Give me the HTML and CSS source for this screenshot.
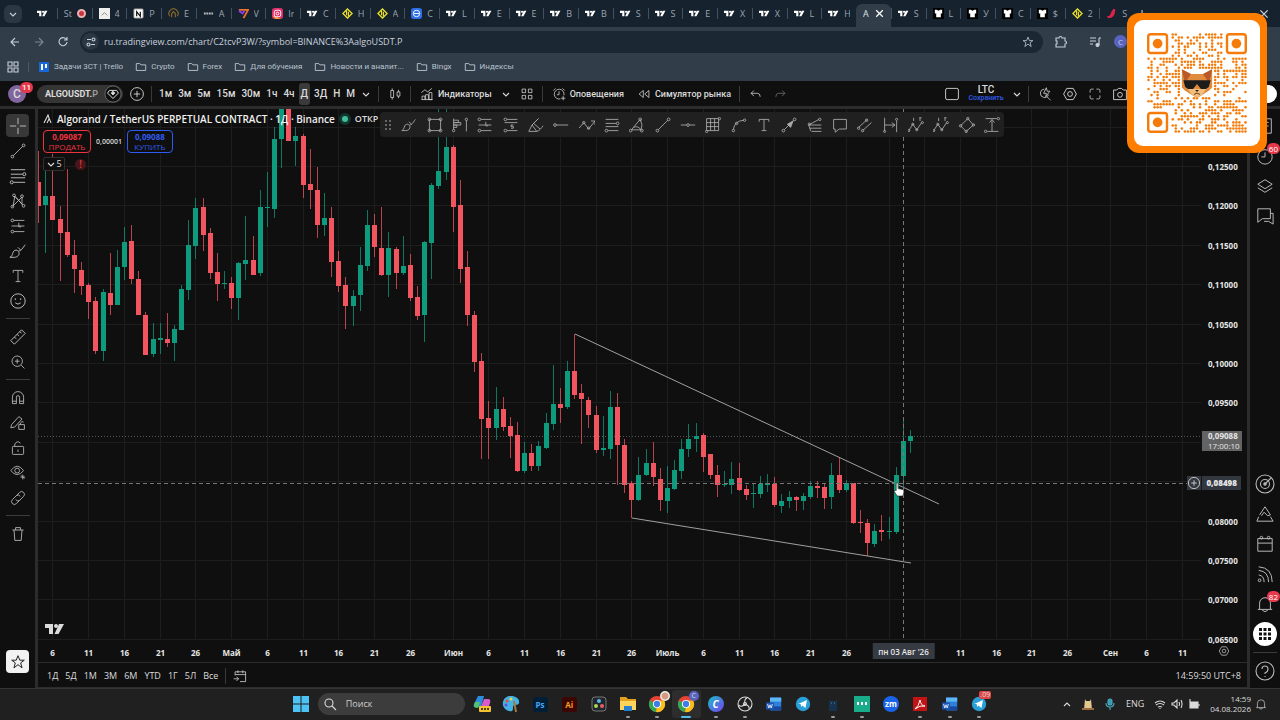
FILE: index.html
```
<!DOCTYPE html>
<html lang="ru">
<head>
    <meta charset="UTF-8">
    <meta name="viewport" content="width=device-width, initial-scale=1.0">
    <title>ALGOUSDT.P 0,09088</title>
    <link rel="stylesheet" href="styles.css">
</head>
<body>
    <svg class="sprite" aria-hidden="true">
        <symbol id="tv" viewBox="0 0 20 12"><path fill="currentColor" d="M0 1h8v10H4V5H0zM13.500 11h-4L14 1h5z"/><circle fill="currentColor" cx="11" cy="3" r="2"/></symbol>
        <symbol id="diamond" viewBox="0 0 12 12"><path d="M6 1l5 5-5 5-5-5z" fill="none" stroke="#e8de2a" stroke-width="1.500"/><path d="M5 3v5M7 4v5" stroke="#e8de2a" stroke-width="1.300"/></symbol>
        <symbol id="white4" viewBox="0 0 12 12"><path fill="#eee" d="M0 0h12v12H0z"/><path d="M3 8l3-3 3 3" fill="none" stroke="#888"/></symbol>
        <symbol id="notion" viewBox="0 0 12 12"><rect x="1" y="1" width="10" height="10" rx="1" fill="#fff" stroke="#999"/><path d="M4 9V4l4 5V4" fill="none" stroke="#111" stroke-width="1.300"/></symbol>
        <symbol id="gold" viewBox="0 0 12 12"><path d="M2 9a5 5 0 1 1 8 0M4 10V6l2-2 2 2v4" fill="none" stroke="#87672c" stroke-width="1.300"/></symbol>
        <symbol id="dots" viewBox="0 0 12 12"><path d="M1 6h10" stroke="#bbb" stroke-width="2" stroke-dasharray="2 .7"/></symbol>
        <symbol id="seven" viewBox="0 0 12 12"><path d="M1 2h10L6 11" fill="none" stroke="#f0722c" stroke-width="2"/><path d="M1 3l4 3 2-3" fill="none" stroke="#8b3df0" stroke-width="2"/></symbol>
        <symbol id="insta" viewBox="0 0 12 12"><rect width="12" height="12" rx="3" fill="#e0306c"/><path d="M0 8l4 4h6z" fill="#f9a42c"/><rect x="2.500" y="2.500" width="7" height="7" rx="2" fill="none" stroke="#fff"/><circle cx="6" cy="6" r="1.500" fill="none" stroke="#fff"/></symbol>
        <symbol id="blue" viewBox="0 0 12 12"><rect width="12" height="12" rx="3" fill="#2f6fe8"/><circle cx="6" cy="6" r="3.500" fill="none" stroke="#fff"/><path d="M3 6h6" stroke="#fff"/></symbol>
        <symbol id="shirt" viewBox="0 0 12 12"><path fill="#000" d="M0 0h12v12H0z"/><path fill="#fff" d="M2 2h2l2 1 2-1h2v4H8.500v4h-5V6H2z"/></symbol>
        <symbol id="chili" viewBox="0 0 12 12"><path d="M8 1h2c0 5-1 10-8 10l-1-2c4 0 4-3 5-5z" fill="#e0224a"/></symbol>
        <symbol id="chev" viewBox="0 0 10 10"><path d="M2 4l3 3 3-3"/></symbol>
        <symbol id="close" viewBox="0 0 10 10"><path d="M2 2l6 6M8 2l-6 6"/></symbol>
        <symbol id="folder" viewBox="0 0 14 12"><path d="M1.500 2h4l1.500 1.500h5.500V10h-11z"/></symbol>
        <symbol id="apps" viewBox="0 0 12 12"><path d="M1 1h4v4H1zM7 1h4v4H7zM1 7h4v4H1zM7 7h4v4H7z"/></symbol>
        <symbol id="back" viewBox="0 0 14 14"><path d="M11 7H3M7 3L3 7l4 4"/></symbol>
        <symbol id="fwd" viewBox="0 0 14 14"><path d="M3 7h8M7 3l4 4-4 4"/></symbol>
        <symbol id="reload" viewBox="0 0 14 14"><path d="M11 7a4 4 0 1 1-1-3l1 1M11 2v3H8"/></symbol>
        <symbol id="tune" viewBox="0 0 14 14"><path d="M3 4.500h4M7 9.500h4"/><circle cx="9.500" cy="4.500" r="1.500"/><circle cx="4.500" cy="9.500" r="1.500"/></symbol>
        <symbol id="star" viewBox="0 0 20 20"><path d="M10 3l2 5h5l-4 3 1.500 5.500L10 13l-4.500 3.500L7 11 3 8h5z"/></symbol>
        <symbol id="puzzle" viewBox="0 0 14 14"><path d="M2 3h3a1.500 1.500 0 0 1 3 0h3v3a1.500 1.500 0 0 1 0 3v3H2V9h1V6H2z"/></symbol>
        <symbol id="music" viewBox="0 0 14 14"><path d="M2 3h6M2 6h6M2 9h3M11 3v7M11 3h2"/><circle cx="9.500" cy="10" r="1.500" fill="currentColor"/></symbol>
        <symbol id="gem" viewBox="0 0 20 20"><circle cx="10" cy="10" r="9" fill="#0f0f0f" stroke="#666"/><path d="M6 6h8l2 3-6 6-6-6z"/><path d="M10 7l2 2-2 2-2-2z" fill="currentColor"/></symbol>
        <symbol id="plus-o" viewBox="0 0 20 20"><circle cx="10" cy="10" r="8"/><path d="M10 6v8M6 10h8"/></symbol>
        <symbol id="candles" viewBox="0 0 20 20"><path d="M4 5h4v10H4zM6 2v3M6 15v3M13 7h4v6h-4zM15 4v3M15 13v3"/></symbol>
        <symbol id="indic" viewBox="0 0 20 20"><path d="M2 8l5-4 4 3 6-5M3 18v-5h4v5M8 18v-7h4v7M13 18V8h4v10zM2 18h16"/></symbol>
        <symbol id="layout4" viewBox="0 0 20 20"><path d="M3 3h5v5H3zM12 3h5v5h-5zM3 12h5v5H3zM12 12h5v5h-5z"/></symbol>
        <symbol id="alarm" viewBox="0 0 20 20"><path d="M17 12a7 7 0 1 0-5 5M10 6v5H7M2 5l3-3M15 2l3 3M16 13v6M13 16h6"/></symbol>
        <symbol id="rewind" viewBox="0 0 20 20"><path d="M9 5v10l-6-5zM17 5v10l-6-5z"/></symbol>
        <symbol id="undo" viewBox="0 0 20 20"><path d="M7 5L3 9l4 4M3 9h9q4 0 4 5"/></symbol>
        <symbol id="redo" viewBox="0 0 20 20"><path d="M13 5l4 4-4 4M17 9H8q-4 0-4 5"/></symbol>
        <symbol id="square" viewBox="0 0 20 20"><rect x="2" y="3" width="16" height="14" rx="2"/></symbol>
        <symbol id="search-fast" viewBox="0 0 20 20"><path d="M9 3a6 6 0 1 0 6 8M13 14l5 5M12 1L8 9h4l-1 5 6-8h-4z"/></symbol>
        <symbol id="hex" viewBox="0 0 20 20"><path d="M6 3h8l4 7-4 7H6l-4-7z"/><circle cx="10" cy="10" r="3"/></symbol>
        <symbol id="full" viewBox="0 0 20 20"><path d="M3 8V5q0-2 2-2h3M12 3h3q2 0 2 2v3M17 12v3q0 2-2 2h-3M8 17H5q-2 0-2-2v-3"/></symbol>
        <symbol id="camera" viewBox="0 0 20 20"><path d="M2 5h4l2-2h4l2 2h4v12H2z"/><circle cx="10" cy="11" r="3"/></symbol>
        <symbol id="cross" viewBox="0 0 20 20"><path d="M10 1v7M10 12v7M1 10h7M12 10h7"/></symbol>
        <symbol id="trend" viewBox="0 0 20 20"><path d="M4 16L16 4"/><circle cx="3" cy="17" r="1.700"/><circle cx="17" cy="3" r="1.700"/></symbol>
        <symbol id="fib" viewBox="0 0 20 20"><path d="M2 3h16M2 8h13M2 12h16M5 17h13"/><circle cx="17" cy="8" r="1.700"/><circle cx="3" cy="17" r="1.700"/></symbol>
        <symbol id="xabcd" viewBox="0 0 20 20"><path d="M4 16L6 4l9 10V5L3 17M6 4l10 11"/><circle cx="3" cy="17" r="1.700"/><circle cx="5" cy="3" r="1.700"/><circle cx="15" cy="4" r="1.700"/><circle cx="17" cy="16" r="1.700"/></symbol>
        <symbol id="longpos" viewBox="0 0 20 20"><path d="M5 3h13M2 10h16M5 17h13M11 6v5h3"/><circle cx="3" cy="3" r="1.700"/><circle cx="3" cy="17" r="1.700"/></symbol>
        <symbol id="shortpos" viewBox="0 0 20 20"><path d="M5 3h13M2 7h16M5 17h13M13 10h-3v2h3v2h-3"/><circle cx="3" cy="3" r="1.700"/><circle cx="3" cy="17" r="1.700"/></symbol>
        <symbol id="brush" viewBox="0 0 20 20"><path d="M1 17c4-1 2-8 7-8 5 1 4 8-2 8zM11 9c1 3 4-2 7-6M10 6l3 3"/></symbol>
        <symbol id="text" viewBox="0 0 20 20"><path d="M4 6V3h12v3M10 3v14M7 17h6"/></symbol>
        <symbol id="smile" viewBox="0 0 20 20"><circle cx="10" cy="10" r="8"/><path d="M7 7v2M13 7v2M7 12q3 3 6 0"/></symbol>
        <symbol id="ruler" viewBox="0 0 20 20"><path d="M2 14L14 2l4 4L6 18zM6 10l2 2M9 7l2 2M12 4l2 2"/></symbol>
        <symbol id="zoomin" viewBox="0 0 20 20"><circle cx="9" cy="9" r="6.500"/><path d="M14 14l4 4M9 6v6M6 9h6"/></symbol>
        <symbol id="magnet" viewBox="0 0 20 20"><path d="M3 17V9a7 7 0 0 1 14 0v8h-5V9a2 2 0 0 0-4 0v8zM3 14h5M12 14h5"/></symbol>
        <symbol id="penlock" viewBox="0 0 20 20"><path d="M2 12L11 2l4 3-9 10-5 1zM11 12h7v6h-7zM13 12v-2q2-3 4-1"/></symbol>
        <symbol id="lock" viewBox="0 0 20 20"><rect x="3" y="8" width="14" height="10" rx="1"/><path d="M6 8V5q3-5 7-1M10 12v3"/></symbol>
        <symbol id="eye" viewBox="0 0 20 20"><path d="M1 7q8-11 16 0-8 10-16 0zM13 15h6M16 12v6M14 13l4 4"/><circle cx="9" cy="7" r="3"/></symbol>
        <symbol id="link" viewBox="0 0 20 20"><path d="M8 7l4-4a3.500 3.500 0 0 1 5 5l-5 5q-3 2-5-1M12 13l-4 4a3.500 3.500 0 0 1-5-5l5-5q3-2 5 1"/></symbol>
        <symbol id="trash" viewBox="0 0 20 20"><path d="M3 5h14M7 5V2h6v3M5 5l1 13h8l1-13"/></symbol>
        <symbol id="rect" viewBox="0 0 20 20"><path d="M3 3h14v14H3z"/><circle cx="3" cy="3" r="1.700"/><circle cx="17" cy="3" r="1.700"/><circle cx="3" cy="17" r="1.700"/><circle cx="17" cy="17" r="1.700"/></symbol>
        <symbol id="profile" viewBox="0 0 20 20"><path d="M2 2v14M2 4h6v3H2M2 7h9v3H2M2 10h4v3H2M18 4v14"/><circle cx="2" cy="17" r="1.500"/><circle cx="18" cy="3" r="1.500"/></symbol>
        <symbol id="highlight" viewBox="0 0 20 20"><path d="M1 18l4-8 8-8M5 10l6 8c4-1 5-4 8-7M7 8l8 7M1 18h10M5 10l8-8"/></symbol>
        <symbol id="ray" viewBox="0 0 20 20"><path d="M4 10h15"/><circle cx="2.500" cy="10" r="1.700"/></symbol>
        <symbol id="path" viewBox="0 0 20 20"><path d="M0 14l6-7 6 8 8-10M15 5h5v5"/><circle cx="6" cy="7" r="1.500"/><circle cx="12" cy="14" r="1.500"/></symbol>
        <symbol id="tri" viewBox="0 0 20 20"><path d="M3 16L14 3q4 7 1 13zM6 13q5-3 10 4"/><circle cx="2" cy="17" r="1.700"/><circle cx="14" cy="3" r="1.700"/><circle cx="16" cy="17" r="1.700"/></symbol>
        <symbol id="hline" viewBox="0 0 20 20"><path d="M1 10h7M12 10h7"/><circle cx="10" cy="10" r="1.700"/></symbol>
        <symbol id="gann" viewBox="0 0 20 20"><path d="M2 2h15v15H2zM2 7h15M2 12h15M7 2v15M12 2v15"/><circle cx="18" cy="2" r="1.500"/><circle cx="2" cy="18" r="1.500"/></symbol>
        <symbol id="arc" viewBox="0 0 20 20"><path d="M3 16q1-11 13-12"/><circle cx="3" cy="17" r="1.500"/><circle cx="17" cy="4" r="1.500"/><circle cx="7" cy="8" r="1.500"/></symbol>
        <symbol id="arrow" viewBox="0 0 20 20"><path d="M4 16L16 4"/><path d="M8 9l7-4-3 8z" fill="currentColor"/><circle cx="3" cy="17" r="1.700"/><circle cx="17" cy="3" r="1.700"/></symbol>
        <symbol id="pitch" viewBox="0 0 20 20"><path d="M2 10l13-7M3 10h15M3 14h15M6 18h12M2 10l3 8"/><circle cx="3" cy="9" r="1.500"/><circle cx="16" cy="3" r="1.500"/></symbol>
        <symbol id="comment" viewBox="0 0 20 20"><path d="M2 3h16v12H9l-5 4v-4H2z"/></symbol>
        <symbol id="channel" viewBox="0 0 20 20"><path d="M2 13L13 3M7 17L18 7"/><circle cx="2" cy="14" r="1.500"/><circle cx="12" cy="4" r="1.500"/><circle cx="7" cy="17" r="1.500"/></symbol>
        <symbol id="range" viewBox="0 0 20 20"><path d="M2 1v17M17 5v14M2 10h13M11 7l4 3-4 3"/><circle cx="2" cy="18" r="1.300"/><circle cx="17" cy="3" r="1.300"/></symbol>
        <symbol id="wave" viewBox="0 0 20 20"><path d="M1 17l5-8 5 7 6-9M7 1v4M14 1h3M15 1v4"/><circle cx="1" cy="17" r="1.300"/><circle cx="6" cy="9" r="1.300"/><circle cx="11" cy="16" r="1.300"/><circle cx="18" cy="7" r="1.300"/></symbol>
        <symbol id="rot" viewBox="0 0 20 20"><path d="M11 2l7 8-9 8-7-7z"/><circle cx="11" cy="2" r="1.500"/><circle cx="18" cy="10" r="1.500"/><circle cx="9" cy="18" r="1.500"/><circle cx="2" cy="11" r="1.500"/></symbol>
        <symbol id="vrange" viewBox="0 0 20 20"><path d="M2 2h14M4 18h14M10 18V4M7 7l3-4 3 4"/><circle cx="18" cy="2" r="1.500"/><circle cx="2" cy="18" r="1.500"/></symbol>
        <symbol id="list" viewBox="0 0 20 20"><path d="M2 2h15v16h-5l-2-2-2 2H2zM5 6h9M5 10h9"/></symbol>
        <symbol id="clock" viewBox="0 0 20 20"><circle cx="10" cy="11" r="8"/><path d="M10 6v5H6"/></symbol>
        <symbol id="layers" viewBox="0 0 20 20"><path d="M2 8l8-5 8 5-8 5zM2 12l8 5 8-5"/></symbol>
        <symbol id="chat" viewBox="0 0 20 20"><path d="M2 2h14v11H7l-5 4zM9 16h5l5 3V7h-3"/></symbol>
        <symbol id="radar" viewBox="0 0 20 20"><circle cx="10" cy="10" r="9"/><circle cx="10" cy="10" r="4.500"/><path d="M10 10l6-6"/><circle cx="10" cy="10" r="1.200" fill="currentColor"/></symbol>
        <symbol id="pyramid" viewBox="0 0 20 20"><path d="M4 11l6-9 6 9-3 1-4-4-3 4M3 13l-2 5h18l-3-5"/></symbol>
        <symbol id="cal" viewBox="0 0 20 20"><path d="M2 4h16v14H2zM2 9h16"/><circle cx="6" cy="3" r="1.500"/><circle cx="14" cy="3" r="1.500"/></symbol>
        <symbol id="rss" viewBox="0 0 20 20"><circle cx="4" cy="17" r="1.500"/><path d="M3 11q6 1 6 8M3 6q11 1 11 13M3 2q15 1 15 17"/></symbol>
        <symbol id="bell" viewBox="0 0 20 20"><path d="M2 16h16M4 16V9a6 6 0 0 1 12 0v7M7 17q3 3 6 0"/></symbol>
        <symbol id="help" viewBox="0 0 20 20"><circle cx="10" cy="10" r="9"/><path d="M7 8q0-3 3-3t3 3-3 4v1M10 15v1"/></symbol>
        <symbol id="goto" viewBox="0 0 20 20"><path d="M3 9V4h15v14h-8M3 8h15M7 2v4M14 2v4M1 14h7M5 11l3 3-3 3"/></symbol>
        <symbol id="chrome" viewBox="0 0 20 20"><circle cx="10" cy="10" r="9" fill="#e64335"/><path d="M10 10L2 6a9 9 0 0 0 7 13z" fill="#33a654"/><path d="M10 10l-1 9A9 9 0 0 0 18 6h-8z" fill="#fbbf1a"/><circle cx="10" cy="10" r="4.500" fill="#fff"/><circle cx="10" cy="10" r="3.500" fill="#3d7ee8"/></symbol>
        <symbol id="word" viewBox="0 0 20 20"><rect x="5" y="2" width="14" height="16" rx="1" fill="#2f7fdc"/><path fill="#5cb7f3" d="M5 2h14v5H5z"/><path fill="#174a9c" d="M5 13h14v5H5z"/><rect y="8" width="10" height="9" rx="1" fill="#1c56b5"/><path d="M2 10l1.500 5L5 11l1.500 4L8 10" fill="none" stroke="#fff"/></symbol>
        <symbol id="tg" viewBox="0 0 20 20"><circle cx="10" cy="10" r="9" fill="#279fd8"/><path d="M4 10l11-5-2 10-4-3-1 2-1-4z" fill="#fff"/></symbol>
    </svg>

    <header class="browser">
        <div class="tabstrip">
            <button class="tab-search" aria-label="Поиск вкладок"><svg class="ic s10"><use href="#chev"/></svg></button>
            <nav class="tabs" id="tabs" aria-label="Вкладки"></nav>
            <div class="window-controls">
                <button aria-label="Новая вкладка">+</button>
                <button class="win-close" aria-label="Закрыть"><svg class="ic s12"><use href="#close"/></svg></button>
            </div>
        </div>
        <div class="urlbar">
            <button aria-label="Назад"><svg class="ic s14"><use href="#back"/></svg></button>
            <button class="dim" aria-label="Вперёд"><svg class="ic s14"><use href="#fwd"/></svg></button>
            <button aria-label="Обновить"><svg class="ic s14"><use href="#reload"/></svg></button>
            <div class="omnibox">
                <span class="site"><svg class="ic s14"><use href="#tune"/></svg></span>
                <input type="text" aria-label="Адрес" value="ru.tradingview.com/chart/C2tcvP3W/?symbol=BINANCE%3AalgoUSDT.P">
                <svg class="ic s14"><use href="#star"/></svg>
            </div>
            <div class="url-actions">
                <button aria-label="Расширения"><svg class="ic s14"><use href="#puzzle"/></svg></button>
                <button aria-label="Медиа"><svg class="ic s14"><use href="#music"/></svg></button>
                <span class="profile">C</span>
            </div>
        </div>
        <nav class="bookmarks">
            <svg class="ic s12"><use href="#apps"/></svg>
            <span class="vsep"></span>
            <a href="#"><svg class="s12" viewBox="0 0 12 12"><rect x="1" y="1" width="10" height="10" rx="1" fill="#1868db"/><path fill="#fff" d="M3 3h2v6H3zM7 3h2v4H7z"/></svg>Задачи 3СТ | Trello</a>
            <a href="#"><svg class="ic s12"><use href="#folder"/></svg>Crypto</a>
            <a href="#"><svg class="ic s12"><use href="#folder"/></svg>Forex</a>
            <a href="#"><svg class="ic s12"><use href="#folder"/></svg>Для обучения</a>
            <a href="#"><svg class="ic s12"><use href="#folder"/></svg>Новости и аналит...</a>
            <a href="#"><svg class="ic s12"><use href="#folder"/></svg>Bingx</a>
            <a href="#"><svg class="ic s12"><use href="#folder"/></svg>Индексы</a>
        </nav>
    </header>

    <div class="topbar">
        <div class="account">C<span class="badge">11</span></div>
        <button class="symbol">ALGOUSDT.<span>P</span><svg class="ic s18"><use href="#gem"/></svg></button>
        <button class="w28" aria-label="Сравнить"><svg class="ic s16"><use href="#plus-o"/></svg></button>
        <span class="vsep"></span>
        <div class="intervals">
            <button>1м</button><button>3м</button><button>5м</button><button>15м</button><button>30м</button><button>1ч</button><button>4ч</button><button class="on">Д</button><button>3Д</button><button>Н</button><button>М</button>
            <button aria-label="Ещё"><svg class="ic s10"><use href="#chev"/></svg></button>
        </div>
        <span class="vsep"></span>
        <button class="w31" aria-label="Свечи"><svg class="ic s14"><use href="#candles"/></svg></button>
        <span class="vsep"></span>
        <button class="labelled"><svg class="ic s14"><use href="#indic"/></svg>Индикаторы</button>
        <button class="w28" aria-label="Избранное"><svg class="ic s10"><use href="#chev"/></svg></button>
        <button aria-label="Шаблоны"><svg class="ic s14"><use href="#layout4"/></svg></button>
        <span class="vsep gap"></span>
        <button class="labelled"><svg class="ic s14"><use href="#alarm"/></svg>Оповещения</button>
        <button class="labelled"><svg class="ic s14"><use href="#rewind"/></svg>Симулятор рынка</button>
        <span class="vsep"></span>
        <button class="w31" aria-label="Отменить"><svg class="ic s14"><use href="#undo"/></svg></button>
        <button class="dim" aria-label="Вернуть"><svg class="ic s14"><use href="#redo"/></svg></button>
        <div class="topbar-right">
            <button aria-label="Макет"><svg class="ic s16"><use href="#square"/></svg></button>
            <button class="save">LTC<small>Сохранить</small></button>
            <button aria-label="Макеты"><svg class="ic s10"><use href="#chev"/></svg></button>
            <span class="vsep"></span>
            <button class="w25" aria-label="Поиск"><svg class="ic s14"><use href="#search-fast"/></svg></button>
            <button class="w25" aria-label="Настройки"><svg class="ic s16"><use href="#hex"/></svg></button>
            <button class="w25" aria-label="Полный экран"><svg class="ic s14"><use href="#full"/></svg></button>
            <button class="w25" aria-label="Снимок"><svg class="ic s16"><use href="#camera"/></svg></button>
            <button class="publish" aria-label="Опубликовать"></button>
        </div>
    </div>

    <main class="workspace">
        <aside class="tools" aria-label="Инструменты рисования">
            <button class="on" aria-label="Перекрестие"><svg class="ic s18"><use href="#cross"/></svg></button>
            <button aria-label="Линия"><svg class="ic s16"><use href="#trend"/></svg></button>
            <button aria-label="Фибоначчи"><svg class="ic s18"><use href="#fib"/></svg></button>
            <button aria-label="Паттерны"><svg class="ic s16"><use href="#xabcd"/></svg></button>
            <button aria-label="Позиция"><svg class="ic s16"><use href="#longpos"/></svg></button>
            <button aria-label="Кисть"><svg class="ic s18"><use href="#brush"/></svg></button>
            <button aria-label="Текст"><svg class="ic s16"><use href="#text"/></svg></button>
            <button aria-label="Значки"><svg class="ic s18"><use href="#smile"/></svg></button>
            <hr>
            <button aria-label="Линейка"><svg class="ic s18"><use href="#ruler"/></svg></button>
            <button aria-label="Увеличить"><svg class="ic s16"><use href="#zoomin"/></svg></button>
            <hr>
            <button aria-label="Магнит"><svg class="ic s16"><use href="#magnet"/></svg></button>
            <button aria-label="Режим рисования"><svg class="ic s16"><use href="#penlock"/></svg></button>
            <button aria-label="Блокировка"><svg class="ic s16"><use href="#lock"/></svg></button>
            <button aria-label="Скрыть"><svg class="ic s16"><use href="#eye"/></svg></button>
            <button aria-label="Связать"><svg class="ic s16"><use href="#link"/></svg></button>
            <hr>
            <button aria-label="Удалить"><svg class="ic s16"><use href="#trash"/></svg></button>
            <button class="fav" aria-label="Панель избранного"><svg class="ic s18"><use href="#star"/></svg></button>
        </aside>

        <section class="chart">
            <div class="plot">
                <svg id="plot" viewBox="38 109 1163 531" preserveAspectRatio="none" role="img" aria-label="График ALGOUSDT.P"></svg>
                <div class="legend">
                    <div class="title">
                        <svg class="ic s10" viewBox="0 0 10 10"><path d="M1 9l4-8 1 3 2 5M4 9l2-4"/></svg>
                        <h1>Algorand / TetherUS PERPETUAL CONTRACT · 1Д · Binance</h1>
                        <span class="status"></span>ОТКР
                    </div>
                    <div class="quotes">
                        <button class="sell"><b>0,09087</b>ПРОДАТЬ</button>
                        <span>0,00001</span>
                        <button class="buy"><b>0,09088</b>КУПИТЬ</button>
                    </div>
                    <div class="studies">
                        <button><svg class="ic s10"><use href="#chev"/></svg>5</button>
                        <span class="alert">!</span>
                    </div>
                </div>
                <div class="floating" id="floating"></div>
                <svg class="tv-logo"><use href="#tv"/></svg>
                <svg class="hand" viewBox="0 0 12 16"><path d="M3 1q2-1 2 1v5l5 1q2 1 1 4l-1 3H4L1 10q0-2 2-1z" fill="#fff" stroke="#222" stroke-width=".7"/></svg>
            </div>
            <div class="price-axis" id="prices">
                <span class="tag last">0,09088<small>17:00:10</small></span>
                <span class="tag cursor"><svg class="ic s14"><use href="#plus-o"/></svg><b>0,08498</b></span>
            </div>
            <div class="time-axis" id="times"></div>
            <div class="corner"><svg class="ic s12"><use href="#hex"/></svg></div>
            <div class="ranges">
                <button>1Д</button><button>5Д</button><button>1М</button><button>3М</button><button>6М</button><button>YTD</button><button>1Г</button><button>5Л</button><button>Все</button>
                <span class="vsep"></span>
                <button aria-label="Перейти к дате"><svg class="ic s14"><use href="#goto"/></svg></button>
                <time>14:59:50 UTC+8</time>
            </div>
        </section>

        <aside class="widgets" aria-label="Виджеты">
            <button aria-label="Список"><svg class="ic s18"><use href="#list"/></svg></button>
            <button aria-label="Оповещения"><svg class="ic s18"><use href="#clock"/></svg><span class="badge">60</span></button>
            <button aria-label="Слои"><svg class="ic s18"><use href="#layers"/></svg></button>
            <button aria-label="Чаты"><svg class="ic s18"><use href="#chat"/></svg></button>
            <div class="spacer"></div>
            <button aria-label="Скринер"><svg class="ic s20"><use href="#radar"/></svg></button>
            <button aria-label="Pine"><svg class="ic s18"><use href="#pyramid"/></svg></button>
            <button aria-label="Календарь"><svg class="ic s18"><use href="#cal"/></svg></button>
            <button aria-label="Новости"><svg class="ic s18"><use href="#rss"/></svg></button>
            <button aria-label="Уведомления"><svg class="ic s18"><use href="#bell"/></svg><span class="badge">82</span></button>
            <button aria-label="Продукты"><svg class="s24" viewBox="0 0 24 24"><circle cx="12" cy="12" r="12" fill="#fff"/><path d="M6 7.500h12M6 12h12M6 16.500h12" stroke="#111" stroke-width="3" stroke-dasharray="3 1.500"/></svg></button>
            <hr>
            <button aria-label="Помощь"><svg class="ic s20"><use href="#help"/></svg></button>
        </aside>
    </main>

    <footer class="taskbar">
        <div class="dock">
            <button aria-label="Пуск"><svg class="s16" viewBox="0 0 16 16"><path fill="#4cc2f5" d="M0 0h7.500v7.500H0zM8.500 0H16v7.500H8.500zM0 8.500h7.500V16H0zM8.500 8.500H16V16H8.500z"/></svg></button>
            <label class="search"><svg class="ic s14" viewBox="0 0 14 14"><circle cx="6" cy="6" r="4"/><path d="M9 9l4 4"/></svg><input type="search" placeholder="Поиск" aria-label="Поиск"></label>
            <button aria-label="Copilot"><svg class="s18" viewBox="0 0 18 18"><path fill="#2a8de0" d="M5 1h6L8 12H2q-2 0-1-3z"/><path fill="#52c46a" d="M2 7h5l-2 6q-5 0-4-3z"/><path fill="#d75bc8" d="M11 4h5q2 1 1 4l-2 6H7z"/><rect x="6" y="11" width="12" height="6" rx="1" fill="#f6c330"/><path d="M8 14h8" stroke="#51400a" stroke-width="2" stroke-dasharray="2 1"/></svg></button>
            <button aria-label="Paint"><svg class="s18" viewBox="0 0 18 18"><path fill="#43b3e6" d="M9 1c5 0 9 3 8 7-1 3-6 1-6 4s0 5-4 4C-2 14-1 1 9 1z"/><circle cx="5" cy="6" r="1.500" fill="#e94b3c"/><circle cx="9" cy="4" r="1.500" fill="#f8d14a"/><circle cx="4" cy="10" r="1.500" fill="#6d4be0"/><path d="M12 6l2 11" stroke="#a7763a" stroke-width="2"/></svg></button>
            <button aria-label="Photoshop"><span class="adobe ps">Ps</span></button>
            <button aria-label="Illustrator"><span class="adobe ai">Ai</span></button>
            <button aria-label="DaVinci"><svg class="s16" viewBox="0 0 16 16"><rect x="1" y="1" width="14" height="14" rx="3" fill="#20262d" stroke="#777"/><circle cx="8" cy="5" r="2" fill="#59b9e8"/><circle cx="5" cy="10" r="2" fill="#a9d94a"/><circle cx="11" cy="10" r="2" fill="#ef5a63"/></svg></button>
            <button class="run" aria-label="Проводник"><svg class="s18" viewBox="0 0 18 18"><path fill="#e3a01f" d="M1 2h6l2 2h8v11H1z"/><path fill="#fcd45c" d="M1 6h16v9H1z"/><path fill="#2580d0" d="M5 11h8v5H5z"/></svg></button>
            <button class="run" aria-label="Chrome"><svg class="s18"><use href="#chrome"/></svg><i class="who face"></i></button>
            <button class="run active" aria-label="Chrome C"><svg class="s18"><use href="#chrome"/></svg><i class="who">C</i></button>
            <button class="run" aria-label="Canva"><span class="canva">C</span></button>
            <button class="run" aria-label="OBS"><svg class="ic s16" viewBox="0 0 16 16"><circle cx="8" cy="8" r="7"/><path d="M8 8q-1-5 2-6M8 8q5 2 4 5M8 8q-4 4-6 1"/><circle cx="8" cy="8" r="1.500"/></svg></button>
            <button aria-label="Word"><svg class="s16"><use href="#word"/></svg></button>
            <button aria-label="Telegram"><svg class="s16"><use href="#tg"/></svg></button>
            <button class="run" aria-label="Кот"><svg class="s14" viewBox="0 0 14 14"><path fill="#17324d" d="M3 3l2 1h4l2-1v11H3z"/><path d="M5 6h1M8 6h1" stroke="#3e87c4"/></svg></button>
            <button class="run" aria-label="Терминал"><svg class="s16" viewBox="0 0 16 16"><path fill="#18ac8b" d="M0 0h16v16H0z"/><path d="M4 6v3M8 6v3M12 6v3" stroke="#fff" stroke-width="2"/></svg></button>
            <button aria-label="Zoom"><span class="zm">zm</span></button>
            <button class="run" aria-label="Acrobat"><svg class="s14" viewBox="0 0 14 14"><path fill="#c21414" d="M0 0h14v14H0z"/><path d="M2 12q4-3 5-9 1 6 5 6-5-1-10 3" fill="none" stroke="#fff"/></svg></button>
            <button class="run" aria-label="Word 2"><svg class="s16"><use href="#word"/></svg></button>
            <button class="run" aria-label="Telegram 2"><svg class="s16"><use href="#tg"/></svg><i class="count">.09</i></button>
        </div>
        <div class="tray">
            <svg class="ic s10" viewBox="0 0 10 10"><path d="M2 7l3-3 3 3"/></svg>
            <svg class="s12" viewBox="0 0 12 12"><path fill="#e4c78c" d="M3 1l1 2h4l1-2 1 11H2z"/><path fill="#9a6a3c" d="M0 10h12v2H0z"/></svg>
            <svg class="ic mic s12" viewBox="0 0 12 12"><rect x="4" y="1" width="4" height="6" rx="2" fill="#379bb5"/><path d="M2 5q0 4 4 4t4-4M6 9v3"/></svg>
            <span>ENG</span>
            <div class="net">
                <svg class="ic s12" viewBox="0 0 12 12"><path d="M1 5q5-4 10 0M2 7q4-3 8 0M4 9q2-1 4 0M6 10v1"/></svg>
                <svg class="ic s12" viewBox="0 0 12 12"><path d="M1 5h2l3-3v8L3 7H1zM8 4q1 2 0 4M10 2q2 4 0 8"/></svg>
                <svg class="ic s12" viewBox="0 0 12 12"><path fill="currentColor" d="M2 4h8v6H2z"/><path d="M11 6v2M2 1v3"/></svg>
            </div>
            <time>14:59<br>04.08.2026</time>
            <svg class="ic s12"><use href="#bell"/></svg>
        </div>
    </footer>

    <div class="qr"><svg id="qr" viewBox="0 0 33 33" role="img" aria-label="QR-код"></svg></div>

    <script src="script.js"></script>
</body>
</html>
```
FILE: styles.css
```
* {
    box-sizing: border-box;
}
body {
    margin: 0;
    min-height: 100vh;
    display: flex;
    flex-direction: column;
    background-color: #0f0f0f;
    color: #dbdbdb;
    font-family: "Open Sans", "Noto Sans", sans-serif;
    font-size: 10px;
    line-height: 12px;
    overflow-x: hidden;
}
button {
    display: flex;
    align-items: center;
    justify-content: center;
    padding: 0;
    border: none;
    background: none;
    color: inherit;
    font: inherit;
    cursor: pointer;
}
input {
    min-width: 0;
    padding: 0;
    border: none;
    outline: none;
    background: none;
    color: inherit;
    font: inherit;
}
a {
    color: inherit;
    text-decoration: none;
}
svg {
    display: block;
    flex: none;
}
.sprite {
    position: absolute;
    width: 0;
    height: 0;
}
.ic {
    fill: none;
    stroke: currentColor;
    stroke-width: 1.1;
}
.s10 { width: 10px; height: 10px; }
.s12 { width: 12px; height: 12px; }
.s14 { width: 14px; height: 14px; }
.s16 { width: 16px; height: 16px; }
.s18 { width: 18px; height: 18px; }
.s20 { width: 20px; height: 20px; }
.s24 { width: 24px; height: 24px; }
.w25 { width: 25px; }
.w28 { width: 28px; }
.w31 { width: 31px; }
.dim {
    opacity: .5;
}
.vsep {
    width: 1px;
    height: 16px;
    flex: none;
    background-color: #3a3a3a;
}
.badge {
    position: absolute;
    top: -2px;
    right: -1px;
    padding: 0 2px;
    border-radius: 6px;
    background-color: #e5384a;
    color: #fff;
    font-size: 8px;
    line-height: 11px;
}

/* browser */
.browser {
    background-color: #323d4a;
    color: #c8d0d9;
}
.tabstrip {
    display: flex;
    align-items: center;
    height: 27px;
    background-color: #17222f;
}
.tab-search {
    width: 18px;
    height: 18px;
    margin-left: 4px;
    border-radius: 6px;
    background-color: #2c3744;
}
.tabs {
    flex: 1;
    display: flex;
    align-self: stretch;
}
.tab {
    flex: 1 1 0;
    min-width: 0;
    display: flex;
    align-items: center;
    gap: 5px;
    padding-left: 7px;
    overflow: hidden;
    white-space: nowrap;
    font-size: 9px;
    color: #9aa5b1;
    background: linear-gradient(#445060, #445060) left center / 1px 11px no-repeat;
}
.tab:first-child {
    justify-content: center;
    background: none;
}
.tab svg {
    width: 11px;
    height: 11px;
    color: #fff;
}
.tab span {
    width: 6px;
    overflow: hidden;
}
.tab:first-child span {
    display: none;
}
.tab .rec {
    width: 9px;
    height: 9px;
    border: 2px solid #e8b4b4;
    border-radius: 50%;
    background-color: #c8353c;
}
.tab.wide span {
    width: 8px;
}
.tab.active {
    align-self: flex-end;
    height: 23px;
    padding-bottom: 4px;
    border-radius: 6px 6px 0 0;
    background: #323d4a;
    color: #dde3e9;
}
.window-controls {
    width: 146px;
    padding: 0 10px 0 4px;
    display: flex;
    justify-content: space-between;
    font-size: 14px;
}
.urlbar {
    display: flex;
    align-items: center;
    height: 29px;
    padding: 0 8px;
    gap: 10px;
}
.omnibox {
    flex: 1;
    display: flex;
    align-items: center;
    height: 22px;
    padding: 0 8px 0 2px;
    gap: 5px;
    border-radius: 11px;
    background-color: #1c2734;
}
.omnibox input {
    flex: 1;
    font-size: 9px;
}
.site {
    display: grid;
    place-items: center;
    width: 17px;
    height: 17px;
    border-radius: 50%;
    background-color: #2c3744;
}
.url-actions {
    display: flex;
    align-items: center;
    gap: 20px;
    width: 219px;
    padding-left: 1px;
}
.profile {
    width: 13px;
    height: 13px;
    margin-left: -8px;
    border-radius: 50%;
    background-color: #5964c0;
    text-align: center;
    font-size: 8px;
    line-height: 13px;
}
.bookmarks {
    display: flex;
    align-items: center;
    height: 25px;
    padding: 0 7px 4px;
    gap: 12px;
    font-family: Roboto, "Open Sans", sans-serif;
    font-size: 8px;
}
.bookmarks .vsep {
    height: 10px;
    margin: 0 -3px;
    background-color: #4d5967;
}
.bookmarks a {
    display: flex;
    align-items: center;
    gap: 4px;
    color: #b9c2cc;
}

/* chart toolbar */
.topbar {
    display: flex;
    align-items: center;
    height: 25px;
    padding-left: 8px;
    font-family: Roboto, "Open Sans", sans-serif;
    font-weight: 500;
}
.account {
    position: relative;
    width: 18px;
    height: 18px;
    margin-right: 11px;
    border-radius: 50%;
    background-color: #80669c;
    text-align: center;
    font-size: 12px;
    line-height: 18px;
}
.account .badge {
    top: -3px;
    right: -7px;
}
.symbol {
    width: 86px;
    height: 18px;
    padding: 0 1px 0 8px;
    border-radius: 9px;
    background-color: #353535;
    font-size: 9px;
    font-weight: 700;
}
.symbol span {
    color: #999;
}
.symbol svg {
    margin-left: auto;
}
.intervals {
    display: flex;
    justify-content: space-between;
    width: 226px;
    padding: 0 5px;
}
.intervals button {
    height: 22px;
    padding: 0 2px;
}
.intervals .on {
    border-radius: 3px;
    background-color: #3a3a3a;
}
.labelled {
    gap: 4px;
    margin-left: 9px;
    font-size: 9px;
}
.gap {
    margin-left: 8px;
}
.labelled + .labelled {
    margin-left: 13px;
}
.labelled + .vsep {
    margin-left: 8px;
}
.topbar .dim {
    margin-left: 2px;
}
.topbar-right {
    display: flex;
    align-items: center;
    margin-left: auto;
}
.save {
    width: 52px;
    flex-direction: column;
    line-height: 9px;
}
.save small {
    color: #2f5cf0;
    font-size: 7px;
}
.topbar-right .vsep {
    margin: 0 3px 0 6px;
}
.publish {
    width: 24px;
    height: 18px;
    margin: 0 3px 0 121px;
    border-radius: 9px;
    background-color: #fff;
}

/* workspace */
.workspace {
    flex: 1;
    display: flex;
    min-height: 580px;
    border-top: 3px solid #2c2c2c;
}
.tools {
    width: 38px;
    padding: 5px 0 15px;
    display: flex;
    flex-direction: column;
    align-items: center;
    gap: 2px;
    border-right: 3px solid #2c2c2c;
    color: #b8b8b8;
}
.tools button {
    width: 23px;
    height: 23px;
    flex: none;
    border-radius: 4px;
}
.tools .on {
    background-color: #383838;
}
.tools .fav {
    margin-top: auto;
    background-color: #f2f2f2;
    color: #222;
}
hr {
    width: 24px;
    margin: 4px 0;
    border: none;
    border-top: 1px solid #3c3c3c;
}
.widgets {
    width: 33px;
    padding: 2px 0;
    display: flex;
    flex-direction: column;
    align-items: center;
    border-left: 3px solid #2c2c2c;
    color: #b8b8b8;
}
.widgets button {
    position: relative;
    width: 28px;
    height: 30px;
    flex: none;
}
.widgets .badge {
    top: 2px;
}
.widgets hr {
    margin: 3px 0;
}
.spacer {
    flex: 1;
}
.chart {
    flex: 1;
    min-width: 0;
    display: grid;
    grid-template-columns: 1fr 46px;
    grid-template-rows: 1fr 22px 26px;
}
.plot {
    position: relative;
    overflow: hidden;
}
#plot {
    position: absolute;
    width: 100%;
    height: 100%;
}
.grid {
    stroke: #1d1d1d;
    vector-effect: non-scaling-stroke;
}
.up {
    fill: #0e9b7d;
}
.down {
    fill: #f2555f;
}
.drawn {
    stroke: #a0a0a0;
    vector-effect: non-scaling-stroke;
}
.crosshair {
    stroke: #777;
    stroke-dasharray: 4 3;
    vector-effect: non-scaling-stroke;
}
.price-line {
    stroke: #555;
    stroke-dasharray: 1 2;
    vector-effect: non-scaling-stroke;
}
.legend {
    position: absolute;
    top: 3px;
    left: 5px;
    display: flex;
    flex-direction: column;
    gap: 4px;
}
.title {
    display: flex;
    align-items: center;
    gap: 4px;
    height: 14px;
    font-size: 9px;
    font-weight: 600;
    white-space: nowrap;
}
.title h1 {
    margin: 0;
    font-size: 10px;
    font-weight: 600;
    color: #f0f0f0;
}
.status {
    width: 12px;
    height: 12px;
    border: 3px solid #10382e;
    border-radius: 50%;
    background-color: #42bd99;
}
.quotes {
    display: flex;
    align-items: center;
    gap: 5px;
    font-size: 7px;
    font-weight: 600;
}
.quotes button {
    flex-direction: column;
    width: 48px;
    height: 23px;
    border: 1px solid;
    border-radius: 4px;
    font-size: 8px;
    font-weight: 400;
    line-height: 10px;
    background-color: #0f0f0f;
}
.quotes .buy {
    width: 46px;
}
.sell {
    color: #ee3340;
}
.buy {
    color: #2f5cf0;
}
.studies {
    display: flex;
    align-items: center;
    gap: 10px;
}
.studies button {
    width: 22px;
    height: 14px;
    border: 1px solid #303030;
    border-radius: 2px;
    background-color: #0f0f0f;
    font-size: 9px;
}
.alert {
    width: 11px;
    height: 11px;
    border-radius: 50%;
    background-color: #4a1519;
    color: #f04550;
    text-align: center;
    line-height: 11px;
}
.floating {
    position: absolute;
    top: 3px;
    left: 342px;
    display: flex;
    align-items: center;
    justify-content: space-between;
    width: 624px;
    height: 25px;
    padding: 0 4px;
    border-radius: 4px;
    background-color: #202020;
    color: #aaa;
}
.grip {
    width: 8px;
    height: 12px;
    background: radial-gradient(circle, #666 1px, transparent 1px) 0 0 / 4px 4px;
}
.tv-logo {
    position: absolute;
    left: 7px;
    bottom: 5px;
    width: 20px;
    height: 12px;
}
.hand {
    position: absolute;
    left: 73.5%;
    top: 70.3%;
    width: 12px;
    height: 15px;
}
.price-axis, .time-axis {
    position: relative;
    font-size: 8px;
    font-weight: 700;
    color: #e6e6e6;
}
.price-axis .tick {
    position: absolute;
    left: 7px;
    transform: translateY(-50%);
}
.time-axis .tick {
    position: absolute;
    top: 7px;
    transform: translateX(-50%);
    white-space: nowrap;
}
.time-axis .now {
    top: 3px;
    padding: 4px 6px 0;
    height: 16px;
    line-height: 10px;
    background-color: #363a42;
    font-weight: 600;
}
.tag {
    position: absolute;
    z-index: 1;
    transform: translateY(-50%);
}
.last {
    top: 62.5%;
    left: 1px;
    width: 40px;
    padding-left: 6px;
    line-height: 10px;
    background-color: #636363;
}
.last small {
    display: block;
    font-size: 8px;
    font-weight: 400;
}
.cursor {
    top: 70.4%;
    right: 6px;
    display: flex;
    align-items: center;
    background-color: #333840;
}
.cursor b {
    padding: 1px 4px;
    border-left: 1px solid #15171a;
}
.corner {
    display: grid;
    place-items: center;
}
.ranges {
    grid-column: 1 / -1;
    display: flex;
    align-items: center;
    gap: 7px;
    padding: 1px 6px 0 9px;
    border-top: 1px solid #2c2c2c;
    border-bottom: 1px solid #2c2c2c;
    font-size: 9px;
}
.ranges time {
    margin-left: auto;
}

/* windows taskbar */
.taskbar {
    display: grid;
    grid-template-columns: 1fr auto 1fr;
    height: 32px;
    padding-bottom: 1px;
    background-color: #202020;
    border-top: 1px solid #343434;
}
.dock {
    grid-column: 2;
    display: flex;
    align-items: center;
    justify-content: space-between;
    width: 707px;
}
.dock button {
    position: relative;
    width: 29px;
    height: 28px;
}
.run::after {
    content: "";
    position: absolute;
    bottom: 0;
    width: 4px;
    height: 2px;
    border-radius: 1px;
    background-color: #999;
}
.dock .active {
    border-radius: 3px;
    background-color: #2d2d2d;
}
.active.run::after {
    width: 10px;
    background-color: #53bde8;
}
.search {
    display: flex;
    align-items: center;
    gap: 9px;
    width: 147px;
    height: 22px;
    margin: 0 2px;
    padding: 0 5px;
    border-radius: 11px;
    background-color: #3c3c3c;
    font-size: 9px;
}
.search input {
    width: 100px;
}
.search input::placeholder {
    color: #cfcfcf;
}
.adobe {
    width: 15px;
    height: 15px;
    border-radius: 3px;
    font-size: 8px;
    font-weight: 700;
    line-height: 15px;
}
.ps {
    background-color: #001e36;
    color: #45a6f5;
}
.ai {
    background-color: #3b0502;
    color: #f79a22;
}
.canva, .zm {
    width: 16px;
    height: 16px;
    border-radius: 50%;
    background: linear-gradient(135deg, #16c0ca, #7a3df0);
    color: #fff;
    font-style: italic;
    font-weight: 700;
    line-height: 16px;
}
.zm {
    background: #1764e8;
    font-style: normal;
    font-size: 8px;
    line-height: 15px;
}
.who, .count {
    position: absolute;
    top: 1px;
    right: 2px;
    width: 10px;
    height: 10px;
    border-radius: 50%;
    background-color: #5964c0;
    font-size: 7px;
    font-style: normal;
    line-height: 10px;
}
.face {
    background: radial-gradient(circle, #d79a7e 3px, #eee 4px);
}
.count {
    width: 12px;
    height: 8px;
    border-radius: 2px;
    background-color: #e04545;
    line-height: 8px;
}
.tray {
    display: flex;
    align-items: center;
    justify-content: flex-end;
    gap: 10px;
    padding-right: 13px;
    font-size: 9px;
}
.mic {
    color: #49a9bd;
}
.net {
    display: flex;
    gap: 5px;
}
.tray time {
    margin-right: -6px;
    font-size: 8px;
    line-height: 10px;
    text-align: right;
}

/* promo code */
.qr {
    position: absolute;
    top: 13px;
    right: 13px;
    padding: 7px;
    border-radius: 12px;
    background-color: #ff7e00;
}
.qr svg {
    width: 126px;
    height: 126px;
    padding: 13px;
    border-radius: 9px;
    background-color: #fff;
}
```
FILE: script.js
```
const tabs = [
    ['tv', ''], ['rec', 'St'], ['white4', '4'], ['notion', 'P'], ['gold', 'E'], ['dots', 'A'],
    ['seven', 'V'], ['insta', 'Ir'], ['tv', 'C'], ['diamond', 'H'], ['diamond', 'A'], ['blue', 'C'],
    ['tv', 'L'], ['tv', 'E'], ['tv', 'E'], ['tv', 'B'], ['tv', 'B'], ['tv', 'S'], ['tv', 'S'],
    ['tv', 'E'], ['tv', 'X'], ['tv', 'X'], ['tv', 'L'], ['tv', 'H'], ['active', 'A'], ['tv', 'S'],
    ['shirt', 'L'], ['shirt', 'У'], ['shirt', 'C'], ['shirt', '$'], ['diamond', '2'], ['chili', 'S']
];
document.getElementById('tabs').innerHTML = tabs.map(([icon, name]) => {
    if (icon === 'rec') return `<a class="tab wide" href="#"><span>${name}</span><i class="rec"></i></a>`;
    if (icon === 'active') return `<a class="tab active" href="#"><span>${name}</span><svg class="ic"><use href="#close"/></svg></a>`;
    return `<a class="tab" href="#"><svg><use href="#${icon}"/></svg><span>${name}</span></a>`;
}).join('');

const drawTools = ['brush', 'rect', 'profile', 'longpos', 'shortpos', 'highlight', 'ray', 'path', 'fib', 'tri',
    'trend', 'hline', 'gann', 'arc', 'text', 'arrow', 'pitch', 'comment', 'channel', 'range', 'wave', 'wave', 'rot', 'vrange'];
document.getElementById('floating').innerHTML = '<span class="grip"></span>' +
    drawTools.map(t => `<button aria-label="${t}"><svg class="ic s16"><use href="#${t}"/></svg></button>`).join('');

// direction, high, body top, body bottom, low; one candle per day from 4 April
const candles = `d151,182,206,223 u170,196,205,253 d154,196,220,220 d206,219,233,281 d169,232,255,257 d240,255,269,293
d262,270,286,295 d283,285,302,319 d297,301,351,354 u289,292,351,361 d253,293,305,315 u250,267,305,305 u227,242,267,280
d225,241,279,284 d271,279,315,315 d312,315,355,355 u323,339,354,357 u323,338,340,354 d313,339,343,347 u325,329,343,361
u285,289,330,330 u220,245,290,300 u198,208,246,259 d198,207,235,251 d228,233,273,279 d253,272,284,301 u271,283,284,289
d277,283,298,309 u262,263,298,320 u216,260,264,280 d236,260,275,275 u190,207,273,276 u172,207,208,227 u127,139,209,218
u100,100,139,168 d100,100,141,141 u127,136,141,166 d134,136,185,198 d149,184,190,209 d167,190,225,238 u193,218,225,236
d207,218,262,277 d251,261,286,292 d277,285,306,329 u290,296,306,326 u247,265,295,311 u210,225,266,271 d214,225,247,257
d207,248,275,276 u232,248,275,297 d247,249,273,289 u236,266,273,275 d254,265,298,301 d286,297,316,320 u241,242,315,342
u183,185,243,279 u100,171,186,189 u100,147,172,180 d145,147,207,232 d180,205,269,283 d251,267,315,326 d311,315,362,372
d353,361,419,459 d401,418,428,459 u387,409,428,440 d397,409,427,431 d417,426,436,458 d422,435,471,472 u442,453,471,473
d444,453,466,471 u441,446,466,471 u413,423,448,449 u365,404,424,430 d388,404,408,423 u361,371,407,409 d334,371,395,399
d384,393,399,444 d397,400,415,428 d406,415,450,453 u416,448,450,456 u391,407,449,459 d393,407,445,485 d439,445,485,493
d481,483,500,518 u457,475,500,501 u449,463,475,476 d442,463,477,486 d468,479,500,511 u466,488,501,513 u460,470,489,490
u439,449,471,479 u424,439,449,457 u423,436,439,452 d433,435,457,472 d454,454,475,479 d465,475,485,497 u471,484,485,487
u462,479,485,494 d463,478,490,491 d485,489,495,500 u484,493,494,508 u476,484,494,498 u474,483,485,492 d477,484,505,507
u494,501,506,513 u491,497,501,508 d496,497,500,511 u493,496,501,510 u481,486,497,499 d481,486,488,498 d483,487,498,509
u463,475,497,509 d458,475,490,493 u480,483,490,492 d483,483,523,524 d510,522,523,533 d519,523,543,556 u524,531,544,547
d515,530,532,541 u517,531,532,539 u467,475,532,534 u418,441,476,487 u430,436,441,453`.split(/\s+/);
const left = 38, top0 = 109, width = 1163, height = 531;
const dayX = day => 38.2 + day * 7.146;
const priceY = price => 167 + (12500 - price) / 500 * 39.4;
const ticks = [[2, '6'], [7, '11'], [12, '16'], [17, '21'], [22, '26'], [27, 'Май'], [32, '6'], [37, '11'], [42, '16'],
    [47, '21'], [52, '26'], [58, 'Июн'], [63, '6'], [68, '11'], [73, '16'], [78, '21'], [83, '26'], [88, 'Июль'],
    [93, '6'], [98, '11'], [103, '16'], [108, '21'], [113, '26'], [119, ''], [124, ''], [129, '11'], [134, '16'],
    [139, '21'], [144, '26'], [150, 'Сен'], [155, '6'], [160, '11']];

let marks = '';
let timeLabels = '';
let priceLabels = '';
for (const [day, label] of ticks) {
    const x = Math.round(dayX(day)) + .5;
    marks += `<path class="grid" d="M${x} ${top0}v${height}"/>`;
    timeLabels += `<span class="tick" style="left:${(x - left) / width * 100}%">${label}</span>`;
}
for (let price = 13000; price >= 6500; price -= 500) {
    const y = Math.round(priceY(price)) - .5;
    marks += `<path class="grid" d="M${left} ${y}h${width}"/>`;
    if (price < 13000 && price !== 9000 && price !== 8500) {
        priceLabels += `<span class="tick" style="top:${(y + .5 - top0) / height * 100}%">0,${String(price).padStart(5, '0')}</span>`;
    }
}
marks += `<path class="price-line" d="M${left} 436.5h${width}"/>`;
candles.forEach((row, day) => {
    const [high, open, close, low] = row.slice(1).split(',').map(Number);
    const x = Math.round(dayX(day));
    marks += `<g class="${row[0] === 'u' ? 'up' : 'down'}"><rect x="${x}" y="${high}" width="1" height="${low - high}" opacity=".75"/>` +
        `<rect x="${x - 2}" y="${open}" width="5" height="${close - open}"/></g>`;
});
marks += '<path class="drawn" d="M575 334L939 504M632 518L911 563"/>';
marks += `<path class="crosshair" d="M${left} 483.5h${width}M903.5 ${top0}v${height}"/>`;
document.getElementById('plot').innerHTML = marks;
document.getElementById('times').innerHTML = timeLabels +
    `<span class="tick now" style="left:${(903.5 - left) / width * 100}%">пн 03 Авг '26</span>`;
document.getElementById('prices').insertAdjacentHTML('beforeend', priceLabels);

// code dots, with the finders and the logo left free
let seed = 11;
let dots = '';
for (let row = 0; row < 33; row++) {
    for (let col = 0; col < 33; col++) {
        seed = (seed * 16807) % 2147483647;
        const finder = (row < 8 && (col < 8 || col > 24)) || (row > 24 && col < 8);
        const logo = row > 11 && row < 21 && col > 10 && col < 22;
        if (!finder && !logo && seed % 100 < 50) dots += `<circle cx="${col + .5}" cy="${row + .5}" r=".42"/>`;
    }
}
const finder = (x, y) => `<rect x="${x + .4}" y="${y + .4}" width="6.2" height="6.2" rx=".8" fill="none" stroke="#f57c0a" stroke-width=".8"/><circle cx="${x + 3.5}" cy="${y + 3.5}" r="1.6"/>`;
document.getElementById('qr').innerHTML = `<g fill="#f57c0a">${dots}${finder(0, 0)}${finder(26, 0)}${finder(0, 26)}</g>
    <path fill="#df8a3c" d="M11.500 12l3 1.500h4L21.500 12v6l-1 1-4 2.500-4-2.500-1-1z"/>
    <path fill="#b9592a" d="M11.500 12l3 1.500-2 3zM21.500 12l-3 1.500 2 3z"/>
    <path fill="#f3bd7c" d="M13.500 18.500h6l-1.200 1.800-1.800 1-1.800-1z"/>
    <path fill="#1c1c1c" d="M12 15.600h9l-.6 2.200-1 .7h-1.600l-1.300-1.700-1.300 1.700h-1.600l-1-.7zM15.900 18.800h1.200l-.6.700z"/>
    <path d="M15.500 20.300l1-.5 1 .5" fill="none" stroke="#5a2c12" stroke-width=".3"/>`;
```
